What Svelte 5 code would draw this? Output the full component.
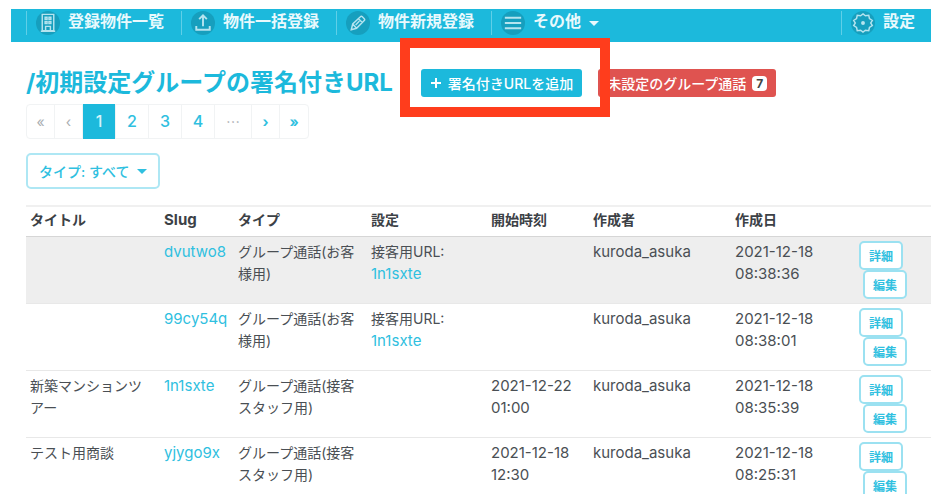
<script>
    let typeFilter = $state("すべて");
    let currentPage = $state(1);

    const pages = [1, 2, 3, 4];

    const columns = [
        { label: "タイトル", width: 134 },
        { label: "Slug", width: 74, latin: true },
        { label: "タイプ", width: 133 },
        { label: "設定", width: 120 },
        { label: "開始時刻", width: 102 },
        { label: "作成者", width: 142 },
        { label: "作成日", width: 124 },
        { label: "", width: 76 },
    ];

    const rows = [
        {
            title: "",
            slug: "dvutwo8",
            type: "グループ通話(お客様用)",
            staffUrl: "1n1sxte",
            start: "",
            author: "kuroda_asuka",
            created: "2021-12-18 08:38:36",
        },
        {
            title: "",
            slug: "99cy54q",
            type: "グループ通話(お客様用)",
            staffUrl: "1n1sxte",
            start: "",
            author: "kuroda_asuka",
            created: "2021-12-18 08:38:01",
        },
        {
            title: "新築マンションツアー",
            slug: "1n1sxte",
            type: "グループ通話(接客スタッフ用)",
            staffUrl: "",
            start: "2021-12-22 01:00",
            author: "kuroda_asuka",
            created: "2021-12-18 08:35:39",
        },
        {
            title: "テスト用商談",
            slug: "yjygo9x",
            type: "グループ通話(接客スタッフ用)",
            staffUrl: "",
            start: "2021-12-18 12:30",
            author: "kuroda_asuka",
            created: "2021-12-18 08:25:31",
        },
    ];
</script>

<div class="page">
    <nav class="navbar">
        <a class="nav-item" href="#list">
            <svg class="nav-icon" viewBox="0 0 25 25" aria-hidden="true">
                <circle class="disc" cx="12.5" cy="12.5" r="12.5" />
                <path d="M6.5 3.5h12v17h-12zM5 21h15M9.5 6.5h2v2h-2zM13.5 6.5h2v2h-2zM9.5 11h2v2h-2zM13.5 11h2v2h-2zM10 20.500v-4.500h5v4.500" />
            </svg>
            <span>登録物件一覧</span>
        </a>
        <a class="nav-item" href="#import">
            <svg class="nav-icon" viewBox="0 0 25 25" aria-hidden="true">
                <circle class="disc" cx="12.5" cy="12.5" r="12.5" />
                <path class="thick" d="M12.500 16V4.500M8.500 8.500l4-4 4 4M5.500 15.500v4h14v-4" />
            </svg>
            <span>物件一括登録</span>
        </a>
        <a class="nav-item" href="#new">
            <svg class="nav-icon" viewBox="0 0 25 25" aria-hidden="true">
                <circle class="disc" cx="12.5" cy="12.5" r="12.5" />
                <path d="M5.500 19.500l1.500-6 8-7.500q1-1 2 0l2 2q1 1 0 2l-8 8zM13 8l4 4M7 13.500l4 4.500M10 14.500l4-4" />
            </svg>
            <span>物件新規登録</span>
        </a>
        <a class="nav-item" href="#other">
            <svg class="nav-icon" viewBox="0 0 25 25" aria-hidden="true">
                <circle class="disc" cx="12.5" cy="12.5" r="12.5" />
                <path class="thick" d="M4 7h17M4 12.500h17M4 18h17" />
            </svg>
            <span>その他</span>
            <i class="caret"></i>
        </a>
        <a class="nav-item settings" href="#settings">
            <svg class="nav-icon" viewBox="0 0 25 25" aria-hidden="true">
                <circle class="disc" cx="12.5" cy="12.5" r="12.5" />
                <path d="M12.500 3l2.500 2 3.500-.5.7 3.300 3 2-1.700 2.700 1.700 2.700-3 2-.7 3.300-3.500-.5-2.500 2-2.500-2-3.500.5-.7-3.300-3-2 1.700-2.700-1.700-2.700 3-2 .7-3.300 3.500.5z" />
                <circle class="dot" cx="12.5" cy="12.5" r="2" />
            </svg>
            <span>設定</span>
        </a>
    </nav>

    <main class="content">
        <header class="heading">
            <h1>/初期設定グループの署名付きURL</h1>
            <div class="highlight">
                <button class="btn btn-add">
                    <svg viewBox="0 0 12 12" aria-hidden="true">
                        <path d="M6 1v10M1 6h10" />
                    </svg>
                    署名付きURLを追加
                </button>
            </div>
            <button class="btn btn-danger">
                未設定のグループ通話
                <span class="badge">7</span>
            </button>
        </header>

        <div class="pagination">
            <button class="page-btn" disabled>«</button>
            <button class="page-btn" disabled>‹</button>
            {#each pages as page}
                <button
                    class="page-btn num {currentPage === page ? 'active' : ''}"
                    onclick={() => (currentPage = page)}
                >
                    {page}
                </button>
            {/each}
            <span class="page-btn dots">⋯</span>
            <button class="page-btn">›</button>
            <button class="page-btn">»</button>
        </div>

        <button class="filter">
            タイプ: {typeFilter}
            <i class="caret"></i>
        </button>

        <table>
            <colgroup>
                {#each columns as column}
                    <col style="width: {column.width}px" />
                {/each}
            </colgroup>
            <thead>
                <tr>
                    {#each columns as column}
                        <th class:latin={column.latin}>{column.label}</th>
                    {/each}
                </tr>
            </thead>
            <tbody>
                {#each rows as row, i}
                    <tr class:hovered={i === 0}>
                        <td>{row.title}</td>
                        <td class="latin"><a href="#{row.slug}">{row.slug}</a></td>
                        <td>{row.type}</td>
                        <td>
                            {#if row.staffUrl}
                                接客用URL:
                                <a class="latin" href="#{row.staffUrl}">{row.staffUrl}</a>
                            {/if}
                        </td>
                        <td class="latin">{row.start}</td>
                        <td class="latin">{row.author}</td>
                        <td class="latin created">{row.created}</td>
                        <td>
                            <div class="actions">
                                <button class="btn-outline">詳細</button>
                                <button class="btn-outline edit">編集</button>
                            </div>
                        </td>
                    </tr>
                {/each}
            </tbody>
        </table>
    </main>
</div>

<style>
    :global(body) {
        overflow: hidden;
        background: #fff;
    }

    .page {
        height: 100vh;
        overflow: hidden;
        box-sizing: border-box;
        padding: 9px 1px 0 11px;
        font-family: Inter, "Noto Sans CJK JP", sans-serif;
        font-size: 14px;
        line-height: 22px;
        color: #4a4f54;
    }

    button {
        font-family: inherit;
        font-size: 14px;
        cursor: pointer;
    }

    a {
        color: #2fc0e0;
        text-decoration: none;
    }

    .navbar {
        display: flex;
        padding: 2px 16px 7px 15px;
        background: #1cb9dc;
    }

    .nav-item {
        display: flex;
        gap: 8px;
        padding: 0 17px 0 9px;
        border-left: 1px solid #5fcfe8;
        color: #e9f9fd;
        font-size: 16px;
        font-weight: 700;
        line-height: 20px;
    }

    .nav-item.settings {
        margin-left: auto;
        padding-right: 0;
    }

    .nav-icon {
        width: 24px;
        height: 24px;
        fill: none;
        stroke: #b5e4ef;
        stroke-width: 1.5;
    }

    .nav-icon .disc {
        fill: #169fbe;
        stroke: none;
    }

    .nav-icon .dot {
        fill: #b5e4ef;
        stroke: none;
    }

    .nav-icon .thick {
        stroke-width: 2;
    }

    .caret {
        align-self: center;
        border: 5px solid transparent;
        border-top-color: currentColor;
        border-bottom: 0;
    }

    .content {
        padding-left: 15px;
    }

    .heading {
        display: flex;
        align-items: center;
        height: 28px;
        margin: 27px 0 7px;
        white-space: nowrap;
    }

    h1 {
        margin: 0 28px 0 0;
        color: #1cb9dc;
        font-size: 24px;
        font-weight: 700;
        line-height: 28px;
    }

    .btn {
        display: flex;
        align-items: center;
        gap: 6px;
        height: 28px;
        padding: 0 9px;
        border: 0;
        border-radius: 3px;
        color: #fff;
        font-weight: 500;
    }

    .btn-add {
        background: #1cb9dc;
    }

    .btn-add svg {
        width: 12px;
        height: 12px;
        stroke: #fff;
        stroke-width: 2;
    }

    .btn-danger {
        margin-left: 16px;
        background: #df5350;
    }

    .badge {
        padding: 0 4px;
        border-radius: 4px;
        background: #fff;
        color: #444;
        font-size: 12px;
        font-weight: 700;
        line-height: 15px;
    }

    .highlight {
        position: relative;
    }

    .highlight::after {
        content: "";
        position: absolute;
        inset: -31px -28px -20px -21px;
        border: 10px solid #ff3d1c;
        pointer-events: none;
        z-index: 1;
    }

    .pagination {
        display: flex;
        width: max-content;
        height: 35px;
        box-sizing: border-box;
        border: 1px solid #f1f3f4;
        border-radius: 4px;
    }

    .page-btn {
        box-sizing: border-box;
        width: 28px;
        padding: 0;
        border: 0;
        border-right: 1px solid #f1f3f4;
        background: transparent;
        color: #2fc0e0;
        font-weight: 700;
        line-height: 33px;
        text-align: center;
    }

    .page-btn:last-child {
        border-right: 0;
    }

    .page-btn:disabled,
    .page-btn.dots {
        color: #a9adb1;
        font-weight: 400;
    }

    .page-btn.dots {
        width: 37px;
    }

    .page-btn.num {
        width: 33px;
        font-size: 16px;
        font-weight: 500;
    }

    .page-btn.active {
        margin: -1px 0;
        background: #1cb9dc;
        color: #d5f3fa;
    }

    .filter {
        display: flex;
        align-items: center;
        gap: 8px;
        height: 36px;
        margin: 14px 0 16px;
        padding: 0 11px;
        border: 2px solid #aee7f4;
        border-radius: 5px;
        background: #fff;
        color: #2fc0e0;
        font-weight: 500;
    }

    table {
        width: 100%;
        border-collapse: separate;
        border-spacing: 0;
        table-layout: fixed;
    }

    th {
        height: 22px;
        padding: 2px 8px 5px 4px;
        border-top: 2px solid #f0f0f0;
        border-bottom: 1px solid #d6d6d6;
        color: #3c4146;
        font-weight: 700;
        text-align: left;
    }

    td {
        padding: 4px 8px 4px 4px;
        border-bottom: 1px solid #e8e8e8;
        vertical-align: top;
    }

    .latin {
        font-size: 15px;
    }

    td.latin,
    th.latin {
        padding-right: 0;
    }

    td.created {
        padding-right: 32px;
    }

    .hovered td {
        background: #eee;
    }

    .actions {
        display: flex;
        flex-direction: column;
        align-items: flex-start;
    }

    .btn-outline {
        width: 44px;
        height: 29px;
        padding: 0;
        border: 2px solid #9be1f1;
        border-radius: 5px;
        background: #fff;
        color: #2fc0e0;
        font-size: 12px;
        font-weight: 700;
    }

    .btn-outline.edit {
        margin-left: 4px;
    }
</style>
